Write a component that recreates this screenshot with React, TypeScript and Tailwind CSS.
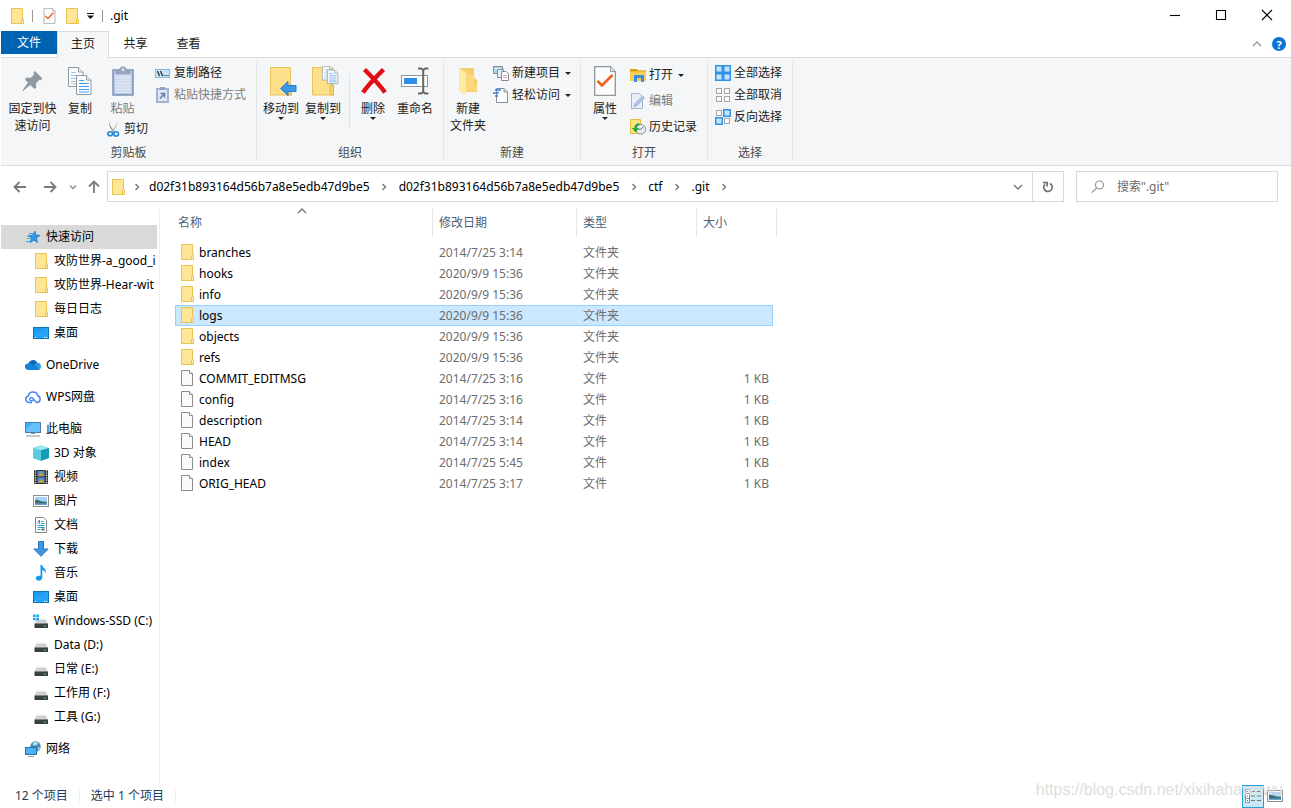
import React from "react";

type P = { children?: React.ReactNode };

/* ---------- icons ---------- */

const Folder = () => (
  <svg width="14" height="16" viewBox="-1 0 14 16" className="shrink-0">
    <path d="M.5.5h11v9.5l1 .8v4.7H.5z" fill="#ffe596" stroke="#e9c452" />
    <path d="M10.5 15.5v-4l1.2-1.2.8.8v4.4z" fill="#ffe9a4" stroke="#e9c452" />
  </svg>
);

const FileIcon = () => (
  <svg width="14" height="16" viewBox="-1 0 14 16" className="shrink-0">
    <path d="M.5.5h8l3 3v12H.5z" fill="#fafafa" stroke="#8d8d8d" />
    <path d="M8.5.5v3h3" fill="#fff" stroke="#8d8d8d" />
  </svg>
);

const CheckedDoc = ({ w, h }: { w: number; h: number }) => (
  <svg width={w} height={h} viewBox="0 0 22 30" className="shrink-0">
    <path d="M.7.7h15.8l4.8 4.8v23.8H.7z" fill="#fcfcfc" stroke="#8f969b" strokeWidth="1.3" />
    <path d="M16.5.7v4.8h4.8" fill="#e8eaec" stroke="#8f969b" />
    <path d="M3.5 15l4.5 4.500L18.500 9" fill="none" stroke="#f2601c" strokeWidth="2.600" />
  </svg>
);

const Down = () => (
  <svg width="6" height="3" viewBox="0 0 6 3" className="shrink-0">
    <path d="M0 0h6L3 3z" fill="#222" />
  </svg>
);

const Chevron = ({ dir, color = "#777" }: { dir: "right" | "down" | "up"; color?: string }) => (
  <svg width="10" height="10" viewBox="0 0 10 10" className="shrink-0">
    <path
      d={dir === "right" ? "M3.5 2l3 3-3 3" : dir === "down" ? "M1 3l4 4 4-4" : "M1 7l4-4 4 4"}
      fill="none"
      stroke={color}
      strokeWidth="1.4"
    />
  </svg>
);

const Pin = () => (
  <svg width="22" height="22" viewBox="0 0 22 22">
    <path d="M12.8 1L20.5 8.6l-1.8 1.6-1.3-.4-3.6 3.8.5 3.9-1.9 1.6-4.1-4.1L.9 21l-.5-.5L6 12.6 2.8 9.4l1.6-1.8 4 .5 3.8-3.7-.7-1.6z" fill="#8f99a1" />
  </svg>
);

const Page = ({ x, y, lines = "#4c9bea" }: { x: number; y: number; lines?: string }) => (
  <g transform={`translate(${x} ${y})`}>
    <path d="M.5.5h10l4.5 4.5v14.5H.5z" fill="#fbfcfd" stroke="#92999f" />
    <path d="M10.5.5V5H15" fill="#eef1f3" stroke="#92999f" />
    <path d="M3 5.5h5M3 8.5h10M3 11.5h10M3 14.5h10M3 17h10" stroke={lines} />
  </g>
);

const Copy = () => (
  <svg width="26" height="30" viewBox="0 0 26 30">
    <Page x={1} y={1} lines="#9fc4ee" />
    <Page x={9} y={9} />
  </svg>
);

const Clipboard = () => (
  <svg width="22" height="30" viewBox="0 0 22 30">
    <rect x="1" y="4" width="20" height="25" fill="#b9c8e4" stroke="#7f92b8" strokeWidth="1.5" />
    <rect x="3" y="7" width="16" height="20" fill="#dfe7f4" />
    <path d="M3 10h16M3 13h16M3 16h16M3 19h16M3 22h16M3 25h16" stroke="#c4d0e8" />
    <path d="M4 8V4.5h3.6C7.6 2 9 1 11 1s3.400 1 3.400 3.500H18V8z" fill="#9aa9c6" stroke="#8f9dbb" />
    <circle cx="11" cy="3.800" r="1.200" fill="#f5f6f7" />
  </svg>
);

const Scissors = () => (
  <svg width="13" height="16" viewBox="0 0 13 16" className="shrink-0">
    <path d="M2.200 0c.2 4 2.300 7 5.800 10.500l-1.200 1C3.500 8 1.500 4.500 2.200 0z" fill="#8a949d" />
    <path d="M10.400 0c0 4-2 7.500-5 11l-1-1C7.500 7 9.400 4 10.400 0z" fill="#a9b2ba" />
    <ellipse cx="3.200" cy="12.800" rx="2.300" ry="2" fill="none" stroke="#1c86cf" strokeWidth="1.600" />
    <ellipse cx="9.200" cy="12.900" rx="2.300" ry="2.100" fill="none" stroke="#1c86cf" strokeWidth="1.600" />
  </svg>
);

const PathIcon = () => (
  <svg width="16" height="16" viewBox="0 0 16 16" className="shrink-0">
    <rect x=".5" y="4.500" width="14" height="8" fill="#c3e5fb" stroke="#8ab9dd" />
    <path d="M2.500 6l2 5M5.500 6l2 5" stroke="#222" strokeWidth="1.200" />
    <path d="M8.500 10.500h1M10.500 10.500h1M12.500 10.500h1" stroke="#222" />
  </svg>
);

const ShortcutIcon = () => (
  <svg width="16" height="16" viewBox="0 0 16 16" className="shrink-0">
    <rect x="2" y="2" width="11" height="13" fill="#dfe7f4" stroke="#a3b3d2" strokeWidth="2" />
    <rect x="5" y="0" width="5" height="3" fill="#93a3c4" />
    <path d="M5 11.500l3.500-4M5.500 6.500h4v4" fill="none" stroke="#6580b5" strokeWidth="1.600" />
  </svg>
);

const BigFolder = ({ children }: P) => (
  <svg width="32" height="30" viewBox="-3 3 32 30">
    <path d="M2.500 4.500h20v21l1 1v5.500h-21z" fill="#ffe08a" stroke="#e8c35a" />
    <path d="M20 32v-9l2.500-2 1 1.500V32z" fill="#f6d26a" stroke="#e3b944" />
    {children}
  </svg>
);

const MoveTo = () => (
  <BigFolder>
    <path d="M12.500 25.500l7.500-7v4h8v6h-8v4z" fill="#3a98e8" stroke="#2b7fc8" />
  </BigFolder>
);

const CopyTo = () => (
  <BigFolder>
    <g transform="translate(12 3) scale(.72)">
      <Page x={0} y={0} lines="#9fc4ee" />
      <Page x={7} y={5} />
    </g>
  </BigFolder>
);

const Cross = () => (
  <svg width="26" height="26" viewBox="0 0 26 26" className="ml-px">
    <path d="M3.500 1.500C7 5 19 17 24 24.500M22.500 1.500C17 7 7 17 2 24.500" fill="none" stroke="#e30d17" strokeWidth="4.400" />
  </svg>
);

const Rename = () => (
  <svg width="28" height="28" viewBox="0 0 28 28">
    <rect x=".5" y="8.500" width="26" height="11" fill="#fff" stroke="#8d959b" />
    <rect x="3" y="11" width="13" height="6" fill="#2f8fe6" />
    <path d="M17 1.500h3.200l2 1.500 2-1.500h3.200M17 26.500h3.200l2-1.500 2 1.500h3.200M22.200 2.500v23" fill="none" stroke="#666" strokeWidth="2" />
  </svg>
);

const NewFolder = () => (
  <svg width="20" height="30" viewBox="0 0 20 30">
    <path d="M1 2h15v9l3 3v12H8z" fill="#f5cd68" />
    <path d="M1 2l7 4v23l-7-4z" fill="#ffe9a6" />
    <path d="M8 7l8 2v9l3 2v5H8z" fill="#fbd878" />
  </svg>
);

const NewItem = () => (
  <svg width="16" height="16" viewBox="0 0 16 16" className="shrink-0">
    <path d="M.5 1.500h9v7h-9z" fill="#a9d8f5" stroke="#858c92" />
    <path d="M2 4h6" stroke="#fff" />
    <path d="M4.500 4.500h6v8h-6z" fill="#e3f1fb" stroke="#858c92" />
    <path d="M8.500 6.500h4.500l2.500 2.500v6.500h-7z" fill="#fff" stroke="#858c92" />
    <path d="M10 10.500h4M10 12.500h4" stroke="#d7a3a3" />
  </svg>
);

const EasyAccess = () => (
  <svg width="16" height="16" viewBox="0 0 16 16" className="shrink-0">
    <path d="M3.500 1.500h7.500l3.500 3.500v10.500h-11z" fill="#fff" stroke="#858c92" />
    <path d="M11 1.500V5h3.500" fill="none" stroke="#858c92" />
    <path d="M2 3h6M0 6h6M2 9h3" stroke="#2787d8" strokeWidth="1.400" />
  </svg>
);

const OpenIcon = () => (
  <svg width="17" height="16" viewBox="0 0 17 16" className="shrink-0">
    <path d="M0 2h7l1 1.500h8V14H0z" fill="#fbcf57" />
    <path d="M0 2h7l1 1.500H16v1H0z" fill="#dc9d17" />
    <path d="M4 15V8h10v7h-3v-4H7v4z" fill="#3b8fd9" />
  </svg>
);

const EditIcon = () => (
  <svg width="16" height="16" viewBox="0 0 16 16" className="shrink-0">
    <path d="M1.500.5h8l3 3v12h-11z" fill="#e9eff8" stroke="#a4b3cf" />
    <path d="M4 14l1-3.500L12.500 3l2 2L7 12.700z" fill="#b5c4e0" stroke="#93a6cb" strokeWidth=".7" />
  </svg>
);

const HistoryIcon = () => (
  <svg width="17" height="16" viewBox="0 0 17 16" className="shrink-0">
    <path d="M.5.500h10v14H.5z" fill="#ffe382" stroke="#e3bd42" />
    <circle cx="10.800" cy="10.300" r="4.900" fill="#e9edf0" stroke="#8a8f94" />
    <path d="M10.800 10.300l2.500-2.500M10.800 10.300h-2.500" fill="none" stroke="#666" />
    <path d="M9.500 4.200C6 4 4.300 6.500 4.300 9H1.800l3.900 4.500L9 9H6.800c.1-1.700 1-2.600 2.700-2.800z" fill="#27a83d" />
  </svg>
);

const Grid4 = ({ on }: { on: boolean[] }) => (
  <svg width="16" height="16" viewBox="0 0 16 16" className="shrink-0">
    {on.map((v, i) => {
      const x = (i % 2) * 8;
      const y = Math.floor(i / 2) * 8;
      return v ? (
        <rect key={i} x={x + 0.75} y={y + 0.75} width="6.5" height="6.500" fill="#c5e4fb" stroke="#2f92e4" strokeWidth="1.500" />
      ) : (
        <rect key={i} x={x + 1.5} y={y + 1.5} width="5" height="5" fill="#fcfcfc" stroke="#a5a5a5" />
      );
    })}
  </svg>
);

const Star = () => (
  <svg width="16" height="16" viewBox="0 0 16 16">
    <path d="M10 2l.9 4 4.100.4-3.500 2.500.9 4.600-3.600-2.300-3.800 2.500 1.300-4.300L3.500 6.500l4.100-.3z" fill="#2f9be8" stroke="#1b77bd" strokeWidth=".7" />
    <path d="M4 4.500h4M2 7.500h3M2 9.500h3M1 12.500h4" stroke="#4aaaf0" />
  </svg>
);

const Desktop = () => (
  <svg width="16" height="16" viewBox="0 0 16 16">
    <rect x=".5" y="2.500" width="15" height="11" fill="#1a9bf4" stroke="#0b74bd" />
    <path d="M1 13V9l10-6h4v10z" fill="#3aaefb" opacity=".45" />
    <path d="M2 12.500h1M11 12.500h1M13 12.500h1" stroke="#fff" />
  </svg>
);

const OneDrive = () => (
  <svg width="16" height="16" viewBox="0 0 16 16">
    <path d="M3.200 7A5 5 0 0 1 12 5l-1 5-8 1z" fill="#0b64b8" />
    <path d="M11 5.700a3.900 3.900 0 0 1 5 3.800c0 2-1.400 3.500-3 3.500H7z" fill="#2a9be6" />
    <path d="M3.200 6.500c2.500-.8 4 .2 5.500 1.200l5.800 4.300c-.5.700-1.100 1-2 1H3.200a3.200 3.200 0 0 1 0-6.500z" fill="#1683d8" />
  </svg>
);

const WpsCloud = () => (
  <svg width="16" height="16" viewBox="0 0 16 16">
    <path d="M7 13.500H4.200A3.300 3.300 0 0 1 3.300 7a4.800 4.800 0 0 1 9.400-.2 3.500 3.500 0 0 1-.2 6.700c-3 0-3.500-5-6-5-1.700 0-2.200 2-1 2.900 1.400 1 2.900-.3 3.500-1.400" fill="none" stroke="#4a86f0" strokeWidth="1.500" />
  </svg>
);

const Computer = () => (
  <svg width="16" height="16" viewBox="0 0 16 16">
    <rect x=".5" y="1.500" width="15" height="10" fill="#46b0f6" stroke="#4a7fa6" />
    <path d="M1 11V8l8-6h6v9z" fill="#8ad2ff" opacity=".5" />
    <path d="M6 12.500h4M1 15h14" stroke="#88959f" />
  </svg>
);

const Cube = () => (
  <svg width="16" height="16" viewBox="0 0 16 16">
    <path d="M0 3l8-2.500L16 3v10l-8 2.800L0 13z" fill="#35b6cb" />
    <path d="M0 3l8-2.500L16 3 8 5.500z" fill="#9fe6ee" />
    <path d="M0 3l8 2.500V15.800L0 13z" fill="#5ccbdb" />
    <path d="M8 5.500L16 3v10l-8 2.800z" fill="#159cb6" />
  </svg>
);

const Film = () => (
  <svg width="16" height="16" viewBox="0 0 16 16">
    <rect x="1" y="1" width="14" height="14" fill="#333" />
    <path d="M2.500 1v14M13.500 1v14" stroke="#eee" strokeWidth="1.400" strokeDasharray="1.200 1.200" />
    <rect x="4.500" y="2" width="7" height="5.500" fill="#4d8fd6" />
    <rect x="4.500" y="8.500" width="7" height="5.500" fill="#4d8fd6" />
    <path d="M5 7l3-4 3 3v1zM5 13.500l3-3.500 3 2v1.500z" fill="#c99a2e" />
  </svg>
);

const Picture = () => (
  <svg width="16" height="16" viewBox="0 0 16 16">
    <rect x=".5" y="2.500" width="15" height="11" fill="#fff" stroke="#909090" />
    <rect x="2" y="4" width="12" height="8" fill="#a6d3f4" />
    <path d="M2 7c3-1 5 2 12 2v3H2z" fill="#3c6f73" />
    <path d="M2 10.500h12V12H2z" fill="#6d9fd0" />
  </svg>
);

const Doc = () => (
  <svg width="16" height="16" viewBox="0 0 16 16">
    <path d="M2.500.5h8l3 3v12h-11z" fill="#fff" stroke="#858585" />
    <path d="M4 6.500L6.500 3v4M8 4.500h2.500M8 6.500h3.500M4.500 8.500h7M4.500 10.500h7M4.500 12.500h3" fill="none" stroke="#2d97cf" />
    <path d="M8.500 12.500h3" stroke="#666" strokeWidth="2" />
  </svg>
);

const Download = () => (
  <svg width="16" height="16" viewBox="0 0 16 16">
    <path d="M5.500.5h5V8h4.700L8 15.300.8 8h4.700z" fill="#3f97e4" stroke="#2a76bd" />
  </svg>
);

const Music = () => (
  <svg width="16" height="16" viewBox="0 0 16 16">
    <path d="M7.500 0h1.700c.3 3 4.300 3.500 3.800 8.500-.8-2.200-2-3-3.700-3.300v7.300c0 4.300-6.500 4.200-6.500.8 0-2.300 2.600-3 4.700-2.300z" fill="#149af0" />
  </svg>
);

const Drive = ({ win = false }: { win?: boolean }) => (
  <svg width="16" height="16" viewBox="0 0 16 16">
    <path d="M3.500 6.500h9.500l2 4.500H1.500z" fill="#cfd1d3" />
    <rect x="1.500" y="10.500" width="13.500" height="4.500" fill="#3d4043" />
    <path d="M11 13h2" stroke="#3ddc4a" strokeWidth="1.200" />
    {win && <path d="M0 1.500h2.600V4H0zM3.300 1.500h2.700V4H3.300zM0 4.700h2.600v2.500H0zM3.300 4.700h2.700v2.500H3.300z" fill="#18a8ee" />}
  </svg>
);

const Network = () => (
  <svg width="16" height="16" viewBox="0 0 16 16">
    <circle cx="10.500" cy="5.500" r="5.200" fill="#4c8fb8" />
    <path d="M8 2c2-1.500 4-1 5 .5l-2 2-3-.5zM13 6l2 1-2 2.500z" fill="#bfe0ee" />
    <rect x=".5" y="6.500" width="11" height="7" fill="#49b2f6" stroke="#2a6f9e" />
    <path d="M3 15.500h6" stroke="#8fa3b0" />
  </svg>
);

const DetailsIcon = () => (
  <svg width="16" height="16" viewBox="0 0 16 16">
    <path d="M.5 1.500h4v13h-4zM.5 5.500h4M.5 10.500h4" fill="#fff" stroke="#8c8c8c" />
    <path d="M2 3.500h1M2 8h1" stroke="#3a78c0" />
    <path d="M2 12.500h1" stroke="#d03030" />
    <path d="M6 3.500h4M12 3.500h4M6 8h4M12 8h4M6 12.500h4M12 12.500h4" stroke="#777" />
  </svg>
);

const Arrow = ({ d }: { d: string }) => (
  <svg width="14" height="14" viewBox="0 0 14 14">
    <path d={d} fill="none" stroke="#7a7a7a" strokeWidth="1.800" />
  </svg>
);

/* ---------- ribbon pieces ---------- */

const Group = ({ label, children, width }: P & { label: string; width: string }) => (
  <section className={`flex shrink-0 flex-col py-1 ${width}`}>
    <div className="flex h-full flex-col border-r border-[#e1e3e5]">
      <div className="flex h-[83px] items-start">{children}</div>
      <h2 className="text-center leading-4 text-[#4a4a4a]">{label}</h2>
    </div>
  </section>
);

const Big = ({
  icon,
  lines,
  drop = false,
  off = false,
  width = "w-[42px]",
}: {
  icon: React.ReactNode;
  lines: string[];
  drop?: boolean;
  off?: boolean;
  width?: string;
}) => (
  <button className={`flex shrink-0 flex-col items-center pt-1 leading-[17px] ${width} ${off ? "text-[#7c7c7c]" : "text-[#222]"}`}>
    <span className="mb-1 flex h-[30px] items-center">{icon}</span>
    {lines.map((l) => (
      <span key={l} className="whitespace-nowrap">
        {l}
      </span>
    ))}
    {drop && <Down />}
  </button>
);

const Small = ({
  icon,
  text,
  drop = false,
  off = false,
  height = "h-[22px]",
}: {
  icon: React.ReactNode;
  text: string;
  drop?: boolean;
  off?: boolean;
  height?: string;
}) => (
  <button className={`flex items-center gap-[3px] whitespace-nowrap ${height} ${off ? "text-[#7c7c7c]" : "text-[#222]"}`}>
    <span className="flex w-4 shrink-0">{icon}</span>
    <span>{text}</span>
    {drop && (
      <span className="pl-[2px]">
        <Down />
      </span>
    )}
  </button>
);

/* ---------- data ---------- */

type Item = { name: string; icon: React.ReactNode };
const tree: { head: Item; items: Item[]; active?: boolean }[] = [
  {
    head: { name: "快速访问", icon: <Star /> },
    active: true,
    items: [
      { name: "攻防世界-a_good_i", icon: <Folder /> },
      { name: "攻防世界-Hear-wit", icon: <Folder /> },
      { name: "每日日志", icon: <Folder /> },
      { name: "桌面", icon: <Desktop /> },
    ],
  },
  { head: { name: "OneDrive", icon: <OneDrive /> }, items: [] },
  { head: { name: "WPS网盘", icon: <WpsCloud /> }, items: [] },
  {
    head: { name: "此电脑", icon: <Computer /> },
    items: [
      { name: "3D 对象", icon: <Cube /> },
      { name: "视频", icon: <Film /> },
      { name: "图片", icon: <Picture /> },
      { name: "文档", icon: <Doc /> },
      { name: "下载", icon: <Download /> },
      { name: "音乐", icon: <Music /> },
      { name: "桌面", icon: <Desktop /> },
      { name: "Windows-SSD (C:)", icon: <Drive win /> },
      { name: "Data (D:)", icon: <Drive /> },
      { name: "日常 (E:)", icon: <Drive /> },
      { name: "工作用 (F:)", icon: <Drive /> },
      { name: "工具 (G:)", icon: <Drive /> },
    ],
  },
  { head: { name: "网络", icon: <Network /> }, items: [] },
];

const files: [string, string, boolean][] = [
  ["branches", "2014/7/25 3:14", true],
  ["hooks", "2020/9/9 15:36", true],
  ["info", "2020/9/9 15:36", true],
  ["logs", "2020/9/9 15:36", true],
  ["objects", "2020/9/9 15:36", true],
  ["refs", "2020/9/9 15:36", true],
  ["COMMIT_EDITMSG", "2014/7/25 3:16", false],
  ["config", "2014/7/25 3:16", false],
  ["description", "2014/7/25 3:14", false],
  ["HEAD", "2014/7/25 3:14", false],
  ["index", "2014/7/25 5:45", false],
  ["ORIG_HEAD", "2014/7/25 3:17", false],
];

const crumbs = ["d02f31b893164d56b7a8e5edb47d9be5", "d02f31b893164d56b7a8e5edb47d9be5", "ctf", ".git"];

/* ---------- page ---------- */

export default function App() {
  return (
    <div className="relative flex min-h-screen flex-col bg-white pl-px font-['Noto_Sans','Noto_Sans_CJK_SC',sans-serif] text-[12px] text-black">
      <header className="flex h-[31px] items-center">
        <div className="flex items-center pl-[9px]">
          <Folder />
          <span className="ml-2 h-3 w-px bg-[#999]" />
          <button aria-label="属性" className="ml-[10px]">
            <CheckedDoc w={13} h={16} />
          </button>
          <button aria-label="新建文件夹" className="ml-[9px]">
            <Folder />
          </button>
          <button aria-label="自定义" className="ml-2">
            <svg width="7" height="6" viewBox="0 0 7 6">
              <path d="M0 0h7v1H0zM0 2.500h7L3.500 6z" fill="#111" />
            </svg>
          </button>
          <span className="ml-2 h-3 w-px bg-[#999]" />
        </div>
        <h1 className="pl-[7px]">.git</h1>
        <div className="ml-auto flex self-start pr-px">
          {[
            ["最小化", "M1 6.500h10"],
            ["最大化", "M1.500 1.500h9v9h-9z"],
            ["关闭", "M1 1l10 10M11 1L1 11"],
          ].map(([n, d]) => (
            <button key={n} aria-label={n} className="flex h-[30px] w-[46px] items-center justify-center">
              <svg width="12" height="12" viewBox="0 0 12 12">
                <path d={d} fill="none" stroke="#000" strokeWidth="1.100" />
              </svg>
            </button>
          ))}
        </div>
      </header>

      <nav className="flex h-[27px] items-start border-b border-[#dadbdc]">
        <button className="h-[23px] w-14 bg-[#0063b1] text-white">文件</button>
        <button className="h-[27px] w-[52px] border-x border-t border-[#dadbdc] bg-[#f5f6f7] pb-[2px] text-[#222]">主页</button>
        <button className="h-[26px] w-[53px] text-[#222]">共享</button>
        <button className="h-[26px] w-[53px] text-[#222]">查看</button>
        <div className="ml-auto flex h-[26px] items-center gap-[10px] pr-[5px]">
          <button aria-label="折叠功能区">
            <Chevron dir="up" color="#999" />
          </button>
          <button aria-label="帮助" className="flex size-[14px] items-center justify-center rounded-full bg-[#0a74d6] text-[11px] font-bold leading-none text-white">
            ?
          </button>
        </div>
      </nav>

      <div className="flex h-[108px] border-b border-[#dadbdc] bg-[#f5f6f7]">
        <Group label="剪贴板" width="w-64">
          <div className="flex items-start pl-1">
            <Big icon={<Pin />} lines={["固定到快", "速访问"]} width="w-[55px]" />
            <Big icon={<Copy />} lines={["复制"]} width="w-10" />
            <div className="flex w-12 flex-col items-start">
              <Big icon={<Clipboard />} lines={["粘贴"]} off width="w-[45px]" />
              <button className="mt-1 ml-[7px] flex h-4 items-center gap-1 whitespace-nowrap text-[#222]">
                <Scissors />
                剪切
              </button>
            </div>
            <div className="ml-[7px] flex flex-col">
              <Small icon={<PathIcon />} text="复制路径" />
              <Small icon={<ShortcutIcon />} text="粘贴快捷方式" off />
            </div>
          </div>
        </Group>
        <Group label="组织" width="w-[187px]">
          <div className="flex items-start pl-[3px]">
            <Big icon={<MoveTo />} lines={["移动到"]} drop />
            <Big icon={<CopyTo />} lines={["复制到"]} drop />
            <span className="mr-[2px] ml-[5px] mt-3 h-[54px] w-px bg-[#dfe1e3]" />
            <Big icon={<Cross />} lines={["删除"]} drop />
            <Big icon={<Rename />} lines={["重命名"]} />
          </div>
        </Group>
        <Group label="新建" width="w-[137px]">
          <div className="flex items-start gap-1 pl-[3px]">
            <Big icon={<NewFolder />} lines={["新建", "文件夹"]} />
            <div className="flex flex-col">
              <Small icon={<NewItem />} text="新建项目" drop />
              <Small icon={<EasyAccess />} text="轻松访问" drop />
            </div>
          </div>
        </Group>
        <Group label="打开" width="w-[127px]">
          <div className="flex items-start gap-1 pl-[3px]">
            <Big icon={<CheckedDoc w={22} h={30} />} lines={["属性"]} drop />
            <div className="flex flex-col">
              <Small icon={<OpenIcon />} text="打开" drop height="h-[26px]" />
              <Small icon={<EditIcon />} text="编辑" off height="h-[26px]" />
              <Small icon={<HistoryIcon />} text="历史记录" height="h-[26px]" />
            </div>
          </div>
        </Group>
        <Group label="选择" width="w-[85px]">
          <div className="flex flex-col pl-[7px]">
            <Small icon={<Grid4 on={[true, true, true, true]} />} text="全部选择" />
            <Small icon={<Grid4 on={[false, false, false, false]} />} text="全部取消" />
            <Small icon={<Grid4 on={[false, true, true, false]} />} text="反向选择" />
          </div>
        </Group>
      </div>

      <div className="flex h-[43px] items-start pt-[5px] pr-[13px]">
        <div className="flex h-[31px] w-[106px] shrink-0 items-center pl-3">
          <button aria-label="后退">
            <Arrow d="M13 7H1.500M6.500 2l-5 5 5 5" />
          </button>
          <button aria-label="前进" className="ml-4">
            <Arrow d="M1 7h11.500M7.500 2l5 5-5 5" />
          </button>
          <button aria-label="最近位置" className="ml-3">
            <svg width="8" height="8" viewBox="0 0 8 8">
              <path d="M1 2.500l3 3 3-3" fill="none" stroke="#999" strokeWidth="1.600" />
            </svg>
          </button>
          <button aria-label="上移" className="ml-[10px]">
            <Arrow d="M7 13V1.500M2 6.500l5-5 5 5" />
          </button>
        </div>
        <div className="flex h-[31px] min-w-0 flex-1 items-center border border-[#d9d9d9] pl-[3px]">
          <Folder />
          <ol className="flex min-w-0 flex-1 items-center overflow-hidden">
            <li className="flex w-6 justify-center">
              <Chevron dir="right" />
            </li>
            {crumbs.map((c, i) => (
              <li key={i} className="flex items-center">
                <a href="#">{c}</a>
                <span className="flex w-[29px] justify-center">
                  <Chevron dir="right" />
                </span>
              </li>
            ))}
          </ol>
          <button aria-label="历史" className="flex w-[29px] shrink-0 justify-center">
            <Chevron dir="down" />
          </button>
          <button aria-label="刷新" className="flex h-full w-[31px] shrink-0 items-center justify-center border-l border-[#d9d9d9]">
            <svg width="12" height="12" viewBox="0 0 12 12">
              <path d="M8 2.600A4.200 4.200 0 1 1 3 3.300M1 1.700h4.200V5.500" fill="none" stroke="#737373" strokeWidth="1.700" />
            </svg>
          </button>
        </div>
        <label className="ml-3 flex h-[31px] w-[202px] shrink-0 items-center gap-3 border border-[#d9d9d9] pl-[14px]">
          <svg width="14" height="14" viewBox="0 0 14 14" className="shrink-0">
            <circle cx="8.500" cy="5" r="4" fill="none" stroke="#8a8f94" strokeWidth="1.100" />
            <path d="M5.600 7.900L.8 12.700" stroke="#8a8f94" strokeWidth="1.200" />
          </svg>
          <input aria-label="搜索" placeholder={'搜索".git"'} className="w-full min-w-0 outline-none placeholder:text-[#6d6d6d]" />
        </label>
      </div>

      <main className="flex flex-1">
        <aside className="w-[159px] shrink-0 border-r border-[#f0f0f0] pt-4">
          {tree.map((g) => (
            <ul key={g.head.name} className="mb-2 w-[156px]">
              <li>
                <a href="#" className={`flex h-6 items-center gap-[5px] pl-6 ${g.active ? "bg-[#d9d9d9]" : ""}`}>
                  <span className="flex w-4 justify-center">{g.head.icon}</span>
                  {g.head.name}
                </a>
              </li>
              {g.items.map((it) => (
                <li key={it.name}>
                  <a href="#" className="flex h-6 items-center gap-[5px] overflow-hidden whitespace-nowrap pl-8">
                    <span className="flex w-4 shrink-0 justify-center">{it.icon}</span>
                    {it.name}
                  </a>
                </li>
              ))}
            </ul>
          ))}
        </aside>

        <div className="pl-[15px]">
          <table className="w-[602px] table-fixed border-separate border-spacing-0 text-left">
            <colgroup>
              <col className="w-[258px]" />
              <col className="w-36" />
              <col className="w-[120px]" />
              <col className="w-[76px]" />
              <col className="w-1" />
            </colgroup>
            <thead className="text-[#4c607a]">
              <tr className="h-7">
                <th className="relative border-r border-[#e5e5e5] p-0 pl-[3px] font-normal">
                  名称
                  <span className="absolute -top-[3px] right-1 left-0 flex justify-center">
                    <Chevron dir="up" />
                  </span>
                </th>
                <th className="border-r border-[#e5e5e5] p-0 pl-[6px] font-normal">修改日期</th>
                <th className="border-r border-[#e5e5e5] p-0 pl-[6px] font-normal">类型</th>
                <th className="p-0 pl-[6px] font-normal">大小</th>
                <td className="border-r border-[#e5e5e5] p-0" />
              </tr>
            </thead>
            <tbody className="text-[#6d6d6d]">
              <tr className="h-[5px]">
                <td colSpan={5} className="p-0" />
              </tr>
              {files.map(([name, date, dir]) => {
                const s = name === "logs";
                const c = s ? "border-y border-[#99d1ff] bg-[#cce8ff]" : "";
                return (
                  <tr key={name} className="h-[21px] leading-[19px]">
                    <td className={`p-0 text-black ${s ? "border-l pl-1" : "pl-[5px]"} ${c}`}>
                      <span className="flex items-center gap-[5px]">
                        <span className="mb-px">{dir ? <Folder /> : <FileIcon />}</span>
                        {name}
                      </span>
                    </td>
                    <td className={`p-0 pl-[6px] ${c}`}>{date}</td>
                    <td className={`p-0 pl-[6px] ${c}`}>{dir ? "文件夹" : "文件"}</td>
                    <td className={`p-0 pr-1 text-right ${s ? "border-r" : ""} ${c}`}>{dir ? "" : "1 KB"}</td>
                    <td className="p-0" />
                  </tr>
                );
              })}
            </tbody>
          </table>
        </div>
      </main>

      <footer className="flex h-6 items-center pr-2 text-[#1e395b]">
        <span className="pl-[14px]">12 个项目</span>
        <span className="mx-[11px] h-3 w-px bg-[#ececec]" />
        <span>选中 1 个项目</span>
        <span className="mx-[11px] h-3 w-px bg-[#ececec]" />
        <div className="ml-auto flex items-center gap-[3px]">
          <button aria-label="详细信息" className="flex h-[23px] w-[22px] items-center justify-center border border-[#26a0da] bg-[#cbe8f6]">
            <DetailsIcon />
          </button>
          <button aria-label="大图标">
            <Picture />
          </button>
        </div>
      </footer>
      <p className="pointer-events-none absolute right-2 bottom-2 font-['Liberation_Sans',sans-serif] text-[16px] leading-5 text-[#dedede]">
        https://blog.csdn.net/xixihahawuwu
      </p>
    </div>
  );
}
